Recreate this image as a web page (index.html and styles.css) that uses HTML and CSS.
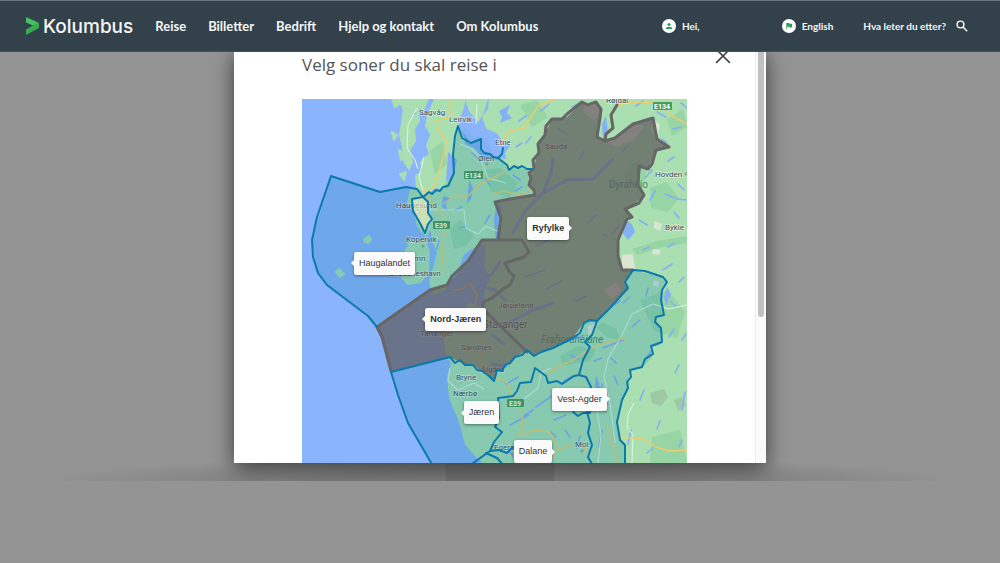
FILE: index.html
```html
<!DOCTYPE html>
<html lang="no">
<head>
<meta charset="utf-8">
<title>Kolumbus – Velg soner</title>
<link rel="stylesheet" href="styles.css">
</head>
<body>
<header class="topbar">
  <a class="logo" href="#">
    <svg class="logo-mark" viewBox="0 0 13 18" aria-hidden="true"><path fill="#46c35f" d="M0 0l13 6v5L0 5.500z"/><path fill="#35ad50" d="M13 6v5L0 18v-5.500L7 8.500l4-2.500z"/></svg>
    <span>Kolumbus</span>
  </a>
  <nav class="main-nav">
    <a href="#">Reise</a>
    <a href="#">Billetter</a>
    <a href="#">Bedrift</a>
    <a href="#">Hjelp og kontakt</a>
    <a href="#">Om Kolumbus</a>
  </nav>
  <div class="tools">
    <a class="tool user" href="#"><svg viewBox="0 0 14 14" aria-hidden="true"><circle cx="7" cy="7" r="7" fill="#fff"/><circle cx="7" cy="5.500" r="1.600" fill="#2aa350"/><path d="M4 10V9.200Q4 7.700 7 7.700T10 9.200V10z" fill="#2aa350"/></svg>Hei,</a>
    <a class="tool language" href="#"><svg viewBox="0 0 14 14" aria-hidden="true"><circle cx="7" cy="7" r="7" fill="#fff"/><path d="M4.300 4h3l.4.700H10v3.800H7.400L7 7.800H5.200V10.200h-.9z" fill="#2aa350"/></svg>English</a>
    <a class="tool" href="#">Hva leter du etter?<svg class="search" viewBox="0 0 12 12" aria-hidden="true"><circle cx="4.500" cy="4.500" r="3.400"/><path d="M7 7l4.200 4.200"/></svg></a>
  </div>
</header>

<main class="stage">
  <section class="modal" role="dialog" aria-labelledby="title">
    <div class="modal-content">
      <div class="modal-head">
        <h1 id="title">Velg soner du skal reise i</h1>
        <button class="close" type="button" aria-label="Lukk"><svg viewBox="0 0 14 14" aria-hidden="true"><path d="M1 1l12 12M13 1L1 13"/></svg></button>
      </div>
      <div class="map">
        <svg class="map-drawing" viewBox="302 99 385 364" role="img" aria-label="Sonekart">
          <rect class="sea" x="302" y="99" width="385" height="364"/>
          <g class="land">
            <path d="M392 99l3 8 6-4 3 8 7-2 2 7 6-1-1-9 5 4 5-11zM404 110l8 3 5-2 2 10-5 8 1 12-6 9 3 12-3 7-5-8-1-14-3-12 2-12z"/>
            <path d="M435 99l-7 17-2 10 5 8-4 12 3 8-9 8 2 9-7 5 1 12 8 4 18-8 9-14 2-20 6-16-3-12 5-11 3-12z"/>
            <path d="M466 99l4 12 8 10 5-9 4-13zM490 99l-1 10-6 8 4 11 10 4 7 9 8 4-6 8 3 16H687V99z"/>
            <path d="M458 126l5 12 9 5 8 6 6 8 14 2 26 6 2 30-16 8-17 2-2 14 5 12-5 10-18 5-12 8-5 14-8 8-4 12-12 6-4-12 5-18 3-12-5-12-3-20-6-10 4-13 9-7 9-12 3-12z"/>
            <path d="M411 190l15 4 6 14 1 16-7 12-8-10-4-16-6-8zM411 240l15 1 3 12-1 20-8 9-12 2-6-7 4-6-1-18z"/>
            <path d="M503 160H687V463H484l-6-5-12-14-7-25-9-21-2-21 4-13-6-12-2-24 15-12 11-12 9 4 8-3-2-14 6-12-6-15 2-20 15-6z"/>
            <path d="M364 239l5-3 2 4-3 3-4-2zM336 272l3-3 5 5-4 3zM399 150l5 4-3 6zM400 174l6-2-2 8zM392 132l5 3-3 5z"/>
          </g>
          <g class="hill">
            <path d="M560 356l18-10 18 3-6 12-27 5zM602 322l14 7 5 12-14-4-10-9zM640 300l28-10 17 22-8 26-23-7zM650 188l16-6 13 16-11 14-17-4zM632 249l25-8 30-5v7l-24 4-26 8zM652 437l28-7 7 33h-37zM624 172l14-12 9 10-5 18-16-5zM430 151l13-10 4 23-12 10z"/>
            <path d="M485 170l15-2 18 15-9 15-19-7zM450 228l10-8 14 16-8 10-12 3zM520 105l17-5 11 17-16 10zM667 119l16-10 4 18-15 9z"/>
            <path class="grey" d="M650 393l14-4 4 8-7 9-9-3zM674 400l8-3 4 8-8 6z"/>
          </g>
          <g class="snow">
            <path d="M584 103l13 1 4 11-8 5-9-8zM608 142l11-8 16-10 10 2-11 14-18 7zM652 119l8 5-3 17-6-11zM622 255l11-1 2 15-13 1zM653 249l8 1-2 5-7-1zM654 221l8 3-2 7-6-3zM588 326l8-3-3 10-5 2zM654 280l5 2-1 5-5-2zM604 290l12-8 6 8-10 10z"/>
          </g>
          <g class="water">
            <path d="M448 152l9 8-4 16-7 6 1-14zM463 125l9 10 14 3 8 18 5 4-16-2-9-10-9-4zM499 111l11-6-3 8 5 5-12 5 2-6zM499 202l-2 16 3 20-4 2-2-19zM469 180l4 8-2 11-4 5 1-12zM443 196l7 2-4 7 2 6-6-4zM624 219l8 5 3 8-7 8-6-8zM602 124l4-8 2 16-5 8zM664 297l3-10 4 7-5 12zM596 375l5 15-3 17-4-9z"/>
            <path class="fjords" d="M553 158l-2 15-8 20-18 18-12 22M540 195l27-15 26-1 20-20M505 325l26-14 22-8M480 286l15 4 10 10M492 335l12 9M500 262l-8 12-12 6M492 364l14 2"/>
            <path class="lakes" d="M572 107l9-5M636 106l7-5M657 112l9 5M681 103l6 5M673 129l8-2M662 139l5 4M668 161l6-4M645 178l7-8M678 184l6 6M650 200l5-9M665 194l12 5 10 1M674 212l5 6M639 220l8 5M668 247l7-4M643 250l6-3M663 270l9-6M679 282l5-5M671 302l5 5M669 337l5-8M682 340l4-6M646 359l5-8M675 373l4-8M640 400l4-10M685 392l-3 18M660 421l-3 8M679 447l3-7M631 430l-3 14M647 453l6-5M560 384l12-8M524 416l9-6M510 425l19-10M536 407l20-14M554 420l12-5M506 384l12-7M565 342l19-7M603 348l20-8M611 358l5 5M640 320l-8 7M648 288l-2 8M612 306l8-5M570 355l9 4M565 430l5 7M580 436l-3 12M602 430l-3 17M608 400l-3 12M614 376l4 9M602 384l-2 19M551 432l5 5M630 297l-7 6M538 445l8 3M508 448l5 9M594 361l8-3"/>
            <path class="lakes" d="M513 175l7 5M522 187l-7 4M472 153l7 6M485 178l5 7M455 210l7-3M490 215l-5 8M541 111l8-7M519 121l7-5M516 147l6-4M531 137l-5 6M596 215l-7 7M552 238l-16 8M619 225l-6 8M602 234l5 3M558 129l9 5M584 151l-4 8M628 145l-6 7M545 270l-20 7M562 281l-16 8M587 296l-14 6M460 228l6-2M439 240l-2 9"/>
          </g>
          <g class="roads minor">
            <path d="M417 108l-9 17-1 23 8 12 3 9M424 157l-5 20 5 17M477 104l-1 20M460 144l12 5 9 11 7 18 18 5M430 210h34l2 18 12 6 8-8 11 5M450 368l-2 13 10 9 16-7 10 6M523 400l15-12 3-15 10-5M687 305l-18 4-16-5-21 10-10 21-14 24-4 18 5 20 4 28 2 18M634 403l-6 12-1 12 6 8-1 28M597 411l4 24-3 28"/>
          </g>
          <g class="roads">
            <path d="M451 99v19l-14 2 1 9 8 12-1 9-4 15-5 15-8 17 7 9 8 8 1 20-2 20 2 19M443 204l13-9 11 2 14-14 18-8 12-8M687 124l-15-8-12-13-30-1-16 4M556 99l-18 7-14 22-15 3-9 13M425 187l-4 15 3 10-3 20M492 194l12-3 16 4 15-7M452 290l10-1 8-6 7 12-3 18 6 12-3 13 6 8-4 13 8 14 20 9 6 17 4 3M548 372l25-12 22-14 30-8M521 408l2 19-5 9 17-6 15 2 7 14-3 10-10 5M557 450l15-5 12 1 3 7M620 437l24 2 12 8 13 4 18-1M607 426l5 18 5 19"/>
          </g>

          <g class="shields">
            <rect x="464" y="171" width="19" height="8"/><rect x="433" y="221" width="17" height="8"/><rect x="653" y="102" width="19" height="8"/><rect x="507" y="399" width="17" height="8"/>
            <g><text x="473" y="178">E134</text><text x="441" y="228">E39</text><text x="662" y="109">E134</text><text x="515" y="406">E39</text></g>
          </g>
          <g class="places">
            <text x="419" y="115">Sagvåg</text><text x="449" y="122">Leirvik</text><text x="495" y="145">Etne</text><text x="478" y="161">Ølen</text>
            <text x="396" y="208">Haugesund</text><text x="406" y="242">Kopervik</text><text x="389" y="261">Åkrehamn</text><text x="389" y="276">Skudeneshavn</text>
            <text x="606" y="103">Røldal</text><text x="545" y="149">Sauda</text><text x="655" y="177">Hovden</text><text x="665" y="230">Bykle</text>
            <text x="498" y="308">Jørpeland</text><text x="420" y="336">Tananger</text><text x="461" y="350">Sandnes</text><text x="481" y="372">Ålgård</text>
            <text x="456" y="380">Bryne</text><text x="453" y="396">Nærbø</text><text x="494" y="450">Egersund</text><text x="575" y="447">Moi</text>
            <text class="city" x="483" y="328">Stavanger</text>
            <text class="park" x="609" y="188">Dyraheio</text><text class="park italic" x="541" y="343">Frafjordheiane</text>
          </g>
          <g class="towns"><circle cx="417" cy="212" r="2"/><circle cx="423" cy="246" r="1"/><circle cx="582" cy="451" r="1"/><circle cx="686" cy="174" r="1"/><circle cx="487" cy="164" r="1"/><circle cx="512" cy="454" r="1"/></g>

          <g class="zone-fill">
            <path d="M331 176L380 192 406 187 417 189 423 196 443 187 454 173 453 155 458 126 471 142 481 139 482 150 499 158 507 168 532 169 529 183 535 195 495 202 501 218 498 239 482 239 468 261 447 285 430 290 377 327 368 316 327 285 316 272 312 240z"/>
            <path d="M391 372L450 357 465 365 473 365 494 381 497 370 502 370 515 357 527 350 534 356 573 338 584 322 597 321 628 288 625 282 633 270 663 277 667 282 662 290 663 315 655 318 663 335 660 345 650 348 652 357 642 368 630 370 628 388 622 400 617 422 620 440 625 445V463H432L408 423 398 395z"/>
          </g>
          <path class="city-zone" d="M412 199l11-2 5 5 0 11 4 6-4 5-3 9-5-10-7-12z"/>
          <g class="selected-fill">
            <path d="M535 195L510 199 495 202 501 218 498 239 482 240 468 261 447 285 430 290 377 327 382 337 391 372 450 357 465 365 473 365 494 381 497 370 502 370 515 357 527 350 534 356 573 338 584 322 597 321 628 288 625 282 633 270H622L618 255V238L627 219 632 217 625 210 641 199 644 195 639 185 641 166 648 168 656 152 669 147 657 140 653 118 633 124 615 138 605 142 598 138 601 110 597 103 590 106 582 103 567 117 552 120 545 133 540 142 535 163 532 170 529 183z"/>
          </g>
          <g class="selected-border">
            <path d="M498 239L501 218 495 202 510 199 535 195 534 190 529 185 531 178 529 173 534 168 533 160 539 153 538 144 545 135 546 126 552 119 562 119 567 114 582 102 588 105 596 102 601 109 600 118 597 137 605 141 615 138 633 124 653 118 657 139 669 147 656 150 652 164 648 169 639 166 638 185 644 195 639 203 625 209 632 217 627 219 618 240V256L622 270H633"/>
            <path d="M605 141L606 134 613 128 611 115 617 105"/>
            <path d="M391 371L382 337 377 327 430 290 447 285 452 276 468 261 482 240H522L529 252 524 257 505 263 509 271 514 276 510 285 503 289 492 298 483 302V309L527 352"/>
          </g>
          <g class="border">
            <path d="M498 158L507 165 509 170 514 166 518 168 522 166 527 169 532 169M503 148L502 154 498 158 493 157 490 154 484 153 481 149 481 139 471 143 462 138 458 126 455 136 453 155 454 173 448 186 443 187 440 191 436 190 432 194 429 192 423 197 417 189 406 187 380 192 331 176 317 217 312 240 313 257 318 273 327 285 368 316 377 327"/>
            <path d="M412 199l11-2 5 5 0 11 4 6-4 5-3 9-5-10-7-12z"/>
            <path d="M391 372L450 357 455 363 460 360 465 365 473 365 477 370 482 371 488 375 494 381 497 370 502 371 505 365 510 363 515 357 522 355 527 350 534 356 541 352 553 348 573 338 580 333 584 323 590 320 597 321 610 308 628 288 625 282 633 270 645 271 663 277 667 282 662 290 661 300 664 315 656 317 655 322 661 328 662 342 651 346 653 354 645 359 642 367 630 370 631 377 627 382 628 388 622 400 617 422 620 440 625 445V466"/>
            <path d="M391 372L398 395 408 423 433 466M597 321L592 335 585 342 590 347 583 360 579 375 574 376 562 384 557 381 548 383 546 376 535 368 531 382 520 383 517 391 513 396 498 398 499 418 495 427 502 432 494 442 490 451 469 466M579 375L586 377 591 387 587 400 590 413 583 413 578 416 573 412M587 412L590 423 588 433 592 445 588 457 593 466M490 451L499 450 507 453 513 447M486 453L497 458 504 466"/>
          </g>
        </svg>
        <span class="tip left haugalandet">Haugalandet</span>
        <span class="tip right ryfylke">Ryfylke</span>
        <span class="tip left nord">Nord-Jæren</span>
        <span class="tip left jaeren">Jæren</span>
        <span class="tip right vest">Vest-Agder</span>
        <span class="tip right dalane">Dalane</span>
      </div>
    </div>
    <div class="scroll-track"><div class="scroll-thumb"></div></div>
  </section>
  <div class="under"></div>
</main>
</body>
</html>
```
FILE: styles.css
```css
* { box-sizing: border-box; }

body {
  margin: 0;
  min-height: 100vh;
  background: #949494;
  font-family: Lato, "Open Sans", sans-serif;
}

a { color: inherit; text-decoration: none; }

.topbar {
  display: flex;
  align-items: center;
  height: 52px;
  padding: 0 32px 0 26px;
  background: #33414a;
  border-top: 1px solid #657780;
  border-bottom: 1px solid #435058;
  color: #f4f7f8;
}

.logo {
  display: flex;
  align-items: center;
  gap: 4px;
  font: 500 19px Inter, sans-serif;
}

.logo-mark { width: 13px; height: 18px; }

.main-nav {
  display: flex;
  gap: 22px;
  margin-left: 22px;
  font-size: 13px;
  font-weight: 700;
}

.tools {
  display: flex;
  align-items: center;
  margin-left: auto;
  font-size: 10px;
  font-weight: 700;
}

.tool { display: flex; align-items: center; gap: 6px; }
.tool svg { width: 14px; height: 14px; }
.user { margin-right: 82px; }
.language { margin-right: 30px; }
.tool .search {
  width: 12px;
  height: 12px;
  margin-left: 4px;
  fill: none;
  stroke: #fff;
  stroke-width: 1.4;
}

.stage {
  overflow: hidden;
  background: radial-gradient(ellipse 46% 24px at 50% 100%, #7c7c7c 40%, #949494 100%);
}

.modal {
  display: flex;
  width: 53.2%;
  margin: 0 auto;
  background: #fff;
  box-shadow: 0 4px 20px rgba(0, 0, 0, .62);
  position: relative;
}

.modal-content { flex: 1; padding: 0 68px; }

.modal-head {
  display: flex;
  justify-content: space-between;
  align-items: flex-start;
  height: 47px;
  margin-right: -44px;
}

h1 {
  margin: 0;
  font: 400 17px/26px "Open Sans", sans-serif;
  color: #555;
}

.close {
  width: 16px;
  height: 12px;
  padding: 0;
  border: 0;
  background: none;
  display: flex;
  align-items: flex-end;
}

.close svg {
  width: 16px;
  height: 16px;
  flex: none;
  fill: none;
  stroke: #494949;
  stroke-width: 1.5;
}

.map { position: relative; overflow: hidden; }
.map-drawing { display: block; width: 100%; }

.sea { fill: #8ab4fb; }
.land { fill: #a9dfb1; stroke: #a9dfb1; stroke-width: 2; stroke-linejoin: round; }
.hill { fill: #97d5a4; }
.grey { fill: #9fc9a4; }
.snow { fill: #dce4d2; }
.water { fill: #84b1f3; }
.lakes, .fjords { fill: none; stroke: #86aff4; stroke-width: 1.6; stroke-linecap: round; stroke-linejoin: round; }
.fjords { stroke-width: 3; }
.roads { fill: none; stroke: #ebcd70; stroke-width: 1.5; stroke-linejoin: round; }
.roads.minor { stroke: #d9f2e2; stroke-width: 1.1; }

.zone-fill { fill: #0078a8; fill-opacity: .2; }
.selected-fill { fill: #5b5759; fill-opacity: .7; }
.city-zone { fill: #f5f0c0; fill-opacity: .6; }

.border, .selected-border {
  fill: none;
  stroke: #0a79ab;
  stroke-width: 2;
  stroke-linejoin: round;
  stroke-linecap: round;
}

.selected-border { stroke: #666; stroke-width: 3; }

.places {
  font: 400 8px Roboto, sans-serif;
  fill: #414a52;
  stroke: #fff;
  stroke-width: 1.5;
  stroke-opacity: .5;
  paint-order: stroke;
}

.city { font-size: 10px; }
.park { fill: #458d72; stroke: none; font-size: 10px; }
.italic { font-style: italic; }

.shields rect { fill: #4c9b56; rx: 1px; }
.shields text { font: 700 7px Roboto, sans-serif; fill: #fff; text-anchor: middle; }
.towns { fill: #fff; stroke: #68767a; stroke-width: .8; }

.tip {
  position: absolute;
  padding: 6px 5px;
  border-radius: 2px;
  background: #fafafa;
  box-shadow: 0 1px 3px rgba(0, 0, 0, .45);
  color: #333;
  font: 400 9px/11px "Liberation Sans", sans-serif;
  white-space: nowrap;
}

.tip::before {
  content: "";
  position: absolute;
  top: 50%;
  margin-top: -3px;
  border: 3px solid transparent;
}

.tip.left::before { right: 100%; border-right-color: #fafafa; }
.tip.right::before { left: 100%; border-left-color: #fafafa; }

.haugalandet { left: 13.5%; top: 42%; }
.ryfylke { left: 58.5%; top: 32.4%; font-weight: 700; }
.nord { left: 32%; top: 57.4%; font-weight: 700; }
.jaeren { left: 42%; top: 83%; }
.vest { left: 65%; top: 79.3%; }
.dalane { left: 55%; top: 93.7%; }

.scroll-track {
  width: 11px;
  padding: 0 2px;
  background: #fafafa;
  border-left: 1px solid #eee;
}

.scroll-thumb {
  height: 64.5%;
  border-radius: 0 0 3px 3px;
  background: #c1c1c1;
}

.under {
  width: 108px;
  height: 18px;
  margin: 0 auto;
  position: relative;
  background: rgba(60, 60, 60, .2);
}
```
